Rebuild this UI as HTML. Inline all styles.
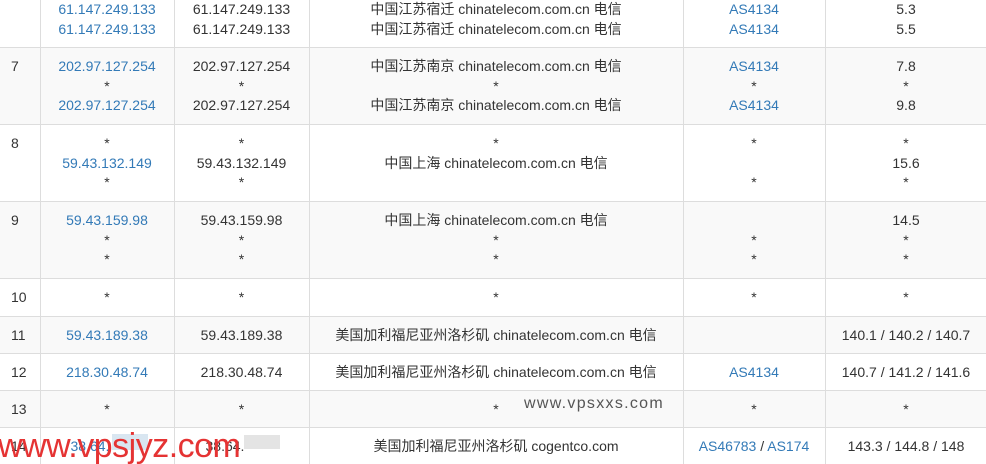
<!DOCTYPE html>
<html><head><meta charset="utf-8"><style>
html,body{margin:0;padding:0;width:986px;height:464px;overflow:hidden;background:#fff}
body{font-family:"Liberation Sans","Noto Sans CJK SC",sans-serif;font-size:14px;color:#333;position:relative}
table{position:absolute;left:0;top:-10px;border-collapse:collapse;table-layout:fixed;width:987px}
td{border:1px solid #ddd;vertical-align:top;text-align:center;padding:9px 0 0 0;line-height:19.5px;white-space:nowrap;overflow:hidden}
td:first-child{text-align:left;padding-left:11px;border-left:none}
tr.g td{background:#f9f9f9}
.b{color:#337ab7}
.wm{position:absolute;left:524px;top:395px;font-size:16px;color:#555;letter-spacing:1.3px}
.red{position:absolute;left:-2px;top:427px;font-size:34px;color:#e53333;font-family:"Liberation Sans",sans-serif;letter-spacing:-0.5px}
.blur{position:absolute;background:#ddd;opacity:.8}
</style></head><body>
<table>
<colgroup><col style="width:40px"><col style="width:134px"><col style="width:135px"><col style="width:374px"><col style="width:142px"><col style="width:162px"></colgroup>
<tr style="height:57px"><td></td><td class="b">61.147.249.133<br>61.147.249.133</td><td>61.147.249.133<br>61.147.249.133</td><td>中国江苏宿迁 chinatelecom.com.cn 电信<br>中国江苏宿迁 chinatelecom.com.cn 电信</td><td class="b">AS4134<br>AS4134</td><td>5.3<br>5.5</td></tr>
<tr class="g" style="height:77px"><td>7</td><td class="b">202.97.127.254<br><span style="color:#333">*</span><br>202.97.127.254</td><td>202.97.127.254<br>*<br>202.97.127.254</td><td>中国江苏南京 chinatelecom.com.cn 电信<br>*<br>中国江苏南京 chinatelecom.com.cn 电信</td><td class="b">AS4134<br><span style="color:#333">*</span><br>AS4134</td><td>7.8<br>*<br>9.8</td></tr>
<tr style="height:77px"><td>8</td><td class="b"><span style="color:#333">*</span><br>59.43.132.149<br><span style="color:#333">*</span></td><td>*<br>59.43.132.149<br>*</td><td>*<br>中国上海 chinatelecom.com.cn 电信<br>&nbsp;</td><td>*<br>&nbsp;<br>*</td><td>*<br>15.6<br>*</td></tr>
<tr class="g" style="height:77px"><td>9</td><td class="b">59.43.159.98<br><span style="color:#333">*</span><br><span style="color:#333">*</span></td><td>59.43.159.98<br>*<br>*</td><td>中国上海 chinatelecom.com.cn 电信<br>*<br>*</td><td>&nbsp;<br>*<br>*</td><td>14.5<br>*<br>*</td></tr>
<tr style="height:38px"><td>10</td><td>*</td><td>*</td><td>*</td><td>*</td><td>*</td></tr>
<tr class="g" style="height:37px"><td>11</td><td class="b">59.43.189.38</td><td>59.43.189.38</td><td>美国加利福尼亚州洛杉矶 chinatelecom.com.cn 电信</td><td></td><td>140.1 / 140.2 / 140.7</td></tr>
<tr style="height:37px"><td>12</td><td class="b">218.30.48.74</td><td>218.30.48.74</td><td>美国加利福尼亚州洛杉矶 chinatelecom.com.cn 电信</td><td class="b">AS4134</td><td>140.7 / 141.2 / 141.6</td></tr>
<tr class="g" style="height:37px"><td>13</td><td>*</td><td>*</td><td>*</td><td>*</td><td>*</td></tr>
<tr style="height:40px"><td>14</td><td class="b" style="text-align:left;padding-left:30px">38.64.</td><td style="text-align:left;padding-left:31px">38.64.</td><td>美国加利福尼亚州洛杉矶 cogentco.com</td><td><span class="b">AS46783</span> / <span class="b">AS174</span></td><td>143.3 / 144.8 / 148</td></tr>
</table>
<div class="blur" style="left:112px;top:434px;width:36px;height:16px;background:#cfe0ee"></div>
<div class="blur" style="left:244px;top:435px;width:36px;height:14px"></div>
<div class="wm">www.vpsxxs.com</div>
<div class="red">www.vpsjyz.com</div>
</body></html>
